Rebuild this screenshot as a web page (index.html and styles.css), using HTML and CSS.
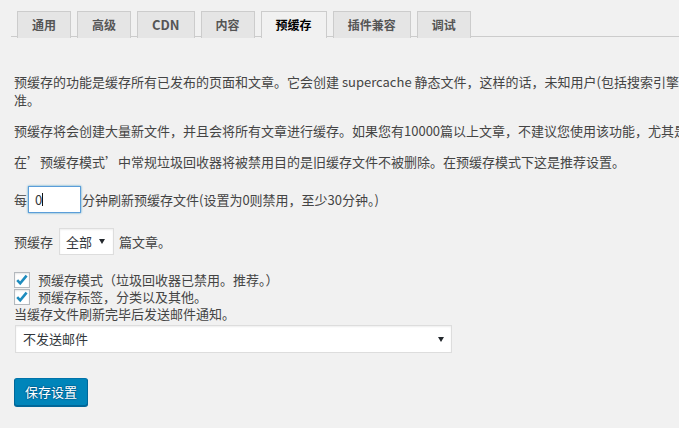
FILE: index.html
```html
<!DOCTYPE html>
<html lang="zh-CN">
<head>
<meta charset="utf-8">
<title>预缓存</title>
<link rel="stylesheet" href="styles.css">
</head>
<body>
<div class="page">
  <nav class="nav">
    <a class="tab">通用</a>
    <a class="tab">高级</a>
    <a class="tab tab-latin">CDN</a>
    <a class="tab">内容</a>
    <a class="tab tab-active">预缓存</a>
    <a class="tab">插件兼容</a>
    <a class="tab">调试</a>
  </nav>
  <div class="content">
    <p class="desc">预缓存的功能是缓存所有已发布的页面和文章。它会创建 supercache 静态文件，这样的话，未知用户(包括搜索引擎爬虫)访问的都是缓存页面。这可能会有助于您的 Google 排名，因为他们现在将网站速度作为判断网站的标准。</p>
    <p class="desc">预缓存将会创建大量新文件，并且会将所有文章进行缓存。如果您有10000篇以上文章，不建议您使用该功能，尤其是在共享主机上。</p>
    <p class="desc">在’预缓存模式’中常规垃圾回收器将被禁用目的是旧缓存文件不被删除。在预缓存模式下这是推荐设置。</p>

    <div class="row row-interval">
      <span>每</span>
      <span class="field"><input class="input" type="text" value="0"></span>
      <span>分钟刷新预缓存文件(设置为0则禁用，至少30分钟。)</span>
    </div>

    <div class="row row-count">
      <span>预缓存</span>
      <div class="select select-small">
        <span>全部</span>
        <svg class="arrow" width="6" height="5" viewBox="0 0 6 5"><polygon points="0,0 6,0 3,5"/></svg>
      </div>
      <span>篇文章。</span>
    </div>

    <div class="checks">
      <label class="check-row">
        <span class="checkbox"><svg width="14" height="14" viewBox="0 0 14 14"><polyline points="2.2,7.2 5.2,10.4 11.6,2.6"/></svg></span>
        <span>预缓存模式（垃圾回收器已禁用。推荐。）</span>
      </label>
      <label class="check-row">
        <span class="checkbox"><svg width="14" height="14" viewBox="0 0 14 14"><polyline points="2.2,7.2 5.2,10.4 11.6,2.6"/></svg></span>
        <span>预缓存标签，分类以及其他。</span>
      </label>
      <div class="notify">当缓存文件刷新完毕后发送邮件通知。</div>
    </div>

    <div class="select select-wide">
      <span>不发送邮件</span>
      <svg class="arrow" width="6" height="5" viewBox="0 0 6 5"><polygon points="0,0 6,0 3,5"/></svg>
    </div>

    <button class="btn-primary" type="button">保存设置</button>
  </div>
</div>
</body>
</html>
```
FILE: styles.css
```css
html, body {
  margin: 0;
  padding: 0;
}
body {
  background: #f1f1f1;
  color: #444;
  font-family: "Noto Sans CJK SC", "Noto Sans", sans-serif;
  font-size: 13px;
  line-height: 18px;
}
.page {
  overflow: hidden;
  width: 679px;
  height: 428px;
}
.nav {
  display: flex;
  margin-left: 11px;
  padding-top: 11px;
  border-bottom: 1px solid #ccc;
}
.tab {
  box-sizing: border-box;
  height: 27px;
  margin: 0 0 -2px 6px;
  padding: 0 14px;
  border: 1px solid #ccc;
  border-bottom: 0;
  background: #e5e5e5;
  color: #555;
  font-size: 12px;
  font-weight: bold;
  line-height: 26px;
  white-space: nowrap;
}
.tab-latin {
  font-size: 13px;
  padding: 0 14px;
}
.tab-active {
  background: #f1f1f1;
  color: #000;
}
.content {
  padding: 23px 0 0 14px;
}
.desc {
  width: 1282px;
  margin: 13px 0;
}
.row {
  display: flex;
  align-items: center;
  white-space: nowrap;
}
.row-interval {
  margin-top: 13px;
}
.field {
  position: relative;
  display: block;
  margin: 2px 1px;
}
.field::after {
  content: "";
  position: absolute;
  left: 14px;
  top: 7px;
  width: 1px;
  height: 13px;
  background: #111;
}
.input {
  display: block;
  box-sizing: border-box;
  width: 53px;
  height: 27px;
  margin: 0;
  padding: 0 6px;
  border: 1px solid #5b9dd9;
  border-radius: 0;
  background: #fff;
  box-shadow: 0 0 2px rgba(30, 140, 190, 0.8);
  color: #32373c;
  font-family: inherit;
  font-size: 13px;
  outline: none;
}
.row-count {
  margin-top: 13px;
}
.select {
  box-sizing: border-box;
  display: flex;
  align-items: center;
  height: 27px;
  border: 1px solid #ddd;
  background: #fff;
  box-shadow: inset 0 1px 2px rgba(0, 0, 0, 0.07);
  color: #32373c;
}
.select-small {
  gap: 7px;
  margin: 0 5px 0 6px;
  padding: 0 8px 0 6px;
}
.arrow {
  fill: #23282d;
  flex: none;
}
.checks {
  margin-top: 16px;
}
.check-row {
  display: flex;
  align-items: flex-start;
  gap: 8px;
  height: 17px;
  line-height: 17px;
}
.checkbox {
  box-sizing: border-box;
  display: flex;
  align-items: center;
  justify-content: center;
  width: 16px;
  height: 16px;
  margin-top: 1px;
  border: 1px solid #b4b9be;
  background: #fff;
  box-shadow: inset 0 1px 2px rgba(0, 0, 0, 0.1);
}
.checkbox polyline {
  fill: none;
  stroke: #1e8cbe;
  stroke-width: 2.6;
}
.notify {
  line-height: 17px;
}
.select-wide {
  justify-content: space-between;
  width: 437px;
  height: 28px;
  margin: 3px 0 0 1px;
  padding: 0 7px;
}
.btn-primary {
  display: block;
  box-sizing: border-box;
  height: 28px;
  margin: 25px 0 0;
  padding: 0 10px;
  border: 1px solid;
  border-color: #0073aa #006799 #006799;
  border-radius: 3px;
  background: #0085ba;
  box-shadow: 0 1px 0 #006799;
  color: #fff;
  font-family: inherit;
  font-size: 13px;
  line-height: 26px;
  text-shadow: 0 -1px 1px #006799, 1px 0 1px #006799, 0 1px 1px #006799, -1px 0 1px #006799;
}
```
